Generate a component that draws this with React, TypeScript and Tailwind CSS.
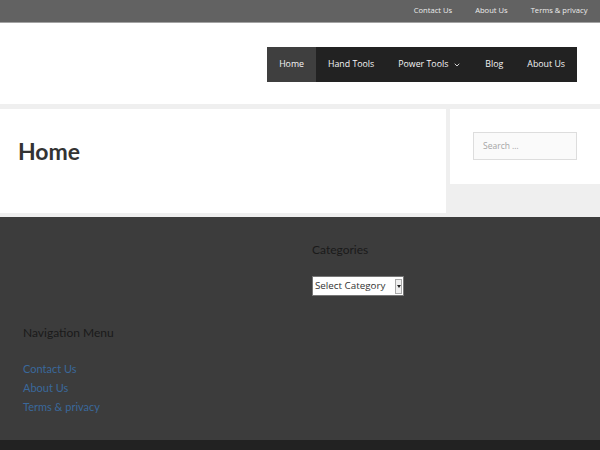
import { ChevronDown } from "lucide-react";

const topLinks = ["Contact Us", "About Us", "Terms & privacy"];

const navItems = [
  { label: "Home", active: true },
  { label: "Hand Tools" },
  { label: "Power Tools", dropdown: true },
  { label: "Blog" },
  { label: "About Us" },
];

const footerLinks = ["Contact Us", "About Us", "Terms & privacy"];

export default function App() {
  return (
    <div className="w-[600px] h-[450px] overflow-hidden bg-[#efefef] flex flex-col font-['Open_Sans',sans-serif]">
      {/* Top Bar */}
      <div className="h-[23px] shrink-0 bg-[#626262] border-b border-[#a3a3a3] flex justify-end items-center pr-[1px]">
        {topLinks.map((link) => (
          <span key={link} className="px-[11.5px] text-[7.6px] text-[#ececec] leading-none">
            {link}
          </span>
        ))}
      </div>

      {/* Header */}
      <header className="h-[81px] shrink-0 bg-white flex justify-end items-center pr-[23px] pt-[2px]">
        <nav className="flex h-[35px] bg-[#222222]">
          {navItems.map((item) => (
            <div
              key={item.label}
              className={`flex items-center gap-[5px] px-[12px] text-[8.8px] text-[#f5f5f5] ${
                item.active ? "bg-[#3f3f3f]" : ""
              }`}
            >
              <span>{item.label}</span>
              {item.dropdown && <ChevronDown className="w-[8px] h-[8px]" strokeWidth={2.5} />}
            </div>
          ))}
        </nav>
      </header>

      {/* Content */}
      <div className="flex mt-[5px] h-[104px] shrink-0">
        <main className="w-[446px] h-[104px] bg-white pl-[18px] pt-[30px]">
          <h1 className="font-['Lato',sans-serif] font-bold text-[23px] leading-[24px] text-[#333333]">Home</h1>
        </main>
        <aside className="ml-[4px] w-[150px] self-start bg-white pl-[23px] pt-[23px] pb-[24px]">
          <div className="w-[104px] h-[28px] bg-[#fafafa] border border-[#dddddd] flex items-center px-[9px]">
            <span className="text-[8.5px] text-[#a5a5a5]">Search …</span>
          </div>
        </aside>
      </div>

      {/* Footer Widgets */}
      <footer className="mt-[4px] h-[223px] shrink-0 bg-[#3c3c3c] px-[23px] pt-[25px]">
        <div className="grid grid-cols-2 gap-x-[24px]">
          <div />
          <div>
            <h2 className="font-['Lato',sans-serif] text-[12px] leading-[16px] text-[#1a1a1a]">Categories</h2>
            <div className="mt-[18px] w-[92px] h-[20px] bg-white border border-[#767676] flex items-center pl-[2px] pr-[1px]">
              <span className="flex-1 text-[9.8px] text-[#333333] leading-none whitespace-nowrap">
                Select Category
              </span>
              <span className="w-[7px] h-[15px] bg-[#efefef] border border-[#a9a9a9] flex items-center justify-center">
                <span className="w-0 h-0 border-l-[2px] border-r-[2px] border-t-[3px] border-l-transparent border-r-transparent border-t-[#222]" />
              </span>
            </div>
          </div>
          <div className="mt-[29px]">
            <h2 className="font-['Lato',sans-serif] text-[12px] leading-[16px] text-[#1a1a1a]">Navigation Menu</h2>
            <ul className="mt-[17.5px]">
              {footerLinks.map((link) => (
                <li key={link} className="font-['Lato',sans-serif] text-[11px] leading-[19px] text-[#3a689b]">
                  {link}
                </li>
              ))}
            </ul>
          </div>
        </div>
      </footer>

      {/* Bottom Bar */}
      <div className="flex-1 bg-[#222222]" />
    </div>
  );
}
